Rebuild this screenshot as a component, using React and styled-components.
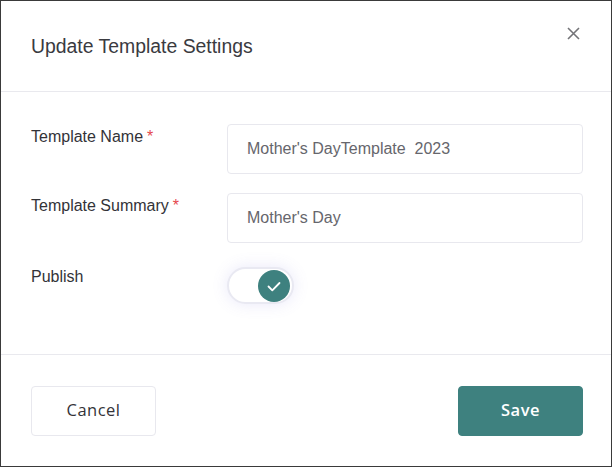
import React from 'react';
import styled, { createGlobalStyle } from 'styled-components';

const GlobalStyle = createGlobalStyle`
  html, body {
    margin: 0;
    padding: 0;
    background: #ffffff;
  }
  * {
    box-sizing: border-box;
  }
`;

const Modal = styled.div`
  width: 612px;
  height: 467px;
  border: 1px solid #3a3a3a;
  background: #ffffff;
  display: flex;
  flex-direction: column;
  font-family: 'Liberation Sans', Arial, sans-serif;
`;

const Header = styled.div`
  position: relative;
  height: 91px;
  flex: none;
  display: flex;
  align-items: center;
  padding: 0 30px 0;
  border-bottom: 1px solid #e9e9ee;
`;

const Title = styled.h2`
  margin: 0;
  font-size: 19.4px;
  font-weight: 400;
  color: #3a3a3f;
`;

const CloseButton = styled.button`
  position: absolute;
  top: 22px;
  right: 28px;
  width: 20px;
  height: 20px;
  padding: 0;
  border: none;
  background: transparent;
  display: flex;
  align-items: center;
  justify-content: center;
  cursor: pointer;
`;

const Body = styled.div`
  flex: 1;
  padding: 32px 28px 0 30px;
  display: flex;
  flex-direction: column;
  gap: 19px;
`;

const Row = styled.div`
  display: grid;
  grid-template-columns: 196px 1fr;
  align-items: start;
`;

const Label = styled.label`
  font-size: 16px;
  line-height: 24px;
  color: #333338;
  padding-top: ${(p) => p.$offset || 1}px;
`;

const Required = styled.span`
  color: #e5484d;
  margin-left: 4px;
`;

const TextInput = styled.input`
  width: 356px;
  height: 50px;
  border: 1px solid #e8e8ee;
  border-radius: 4px;
  padding: 0 19px;
  font-family: 'Liberation Sans', Arial, sans-serif;
  font-size: 16px;
  color: #66666c;
  background: #ffffff;
  outline: none;
`;

const Toggle = styled.div`
  margin-top: 5px;
  width: 67px;
  height: 37px;
  border-radius: 19px;
  border: 2px solid #e9e9f2;
  background: #ffffff;
  box-shadow: 0 0 16px rgba(120, 110, 220, 0.16);
  display: flex;
  align-items: center;
  justify-content: ${(p) => (p.$on ? 'flex-end' : 'flex-start')};
  padding: 0 2px;
`;

const Knob = styled.div`
  width: 32px;
  height: 32px;
  margin-top: 1px;
  border-radius: 50%;
  background: #3e817f;
  display: flex;
  align-items: center;
  justify-content: center;
`;

const Footer = styled.div`
  flex: none;
  height: 112px;
  border-top: 1px solid #e9e9ee;
  padding: 31px 28px 0 30px;
  display: flex;
  justify-content: space-between;
  align-items: flex-start;
`;

const Button = styled.button`
  width: 125px;
  height: 50px;
  padding: 0 0 3px;
  border-radius: 4px;
  font-family: 'Open Sans', 'Inter', sans-serif;
  font-size: 16.5px;
  letter-spacing: 0.5px;
  cursor: pointer;
  border: 1px solid ${(p) => (p.$primary ? '#3e817f' : '#e8e8ee')};
  background: ${(p) => (p.$primary ? '#3e817f' : '#ffffff')};
  color: ${(p) => (p.$primary ? '#ffffff' : '#333338')};
  font-weight: ${(p) => (p.$primary ? 600 : 400)};
`;

export default function App() {
  return (
    <>
      <GlobalStyle />
      <Modal>
        <Header>
          <Title>Update Template Settings</Title>
          <CloseButton aria-label="Close">
            <svg width="13" height="13" viewBox="0 0 13 13" fill="none">
              <path d="M1 1l11 11M12 1L1 12" stroke="#747478" strokeWidth="1.6" />
            </svg>
          </CloseButton>
        </Header>
        <Body>
          <Row>
            <Label>
              Template Name<Required>*</Required>
            </Label>
            <TextInput readOnly value="Mother's DayTemplate  2023" />
          </Row>
          <Row>
            <Label>
              Template Summary<Required>*</Required>
            </Label>
            <TextInput readOnly value="Mother's Day" />
          </Row>
          <Row>
            <Label $offset={3}>Publish</Label>
            <Toggle $on>
              <Knob>
                <svg width="14" height="11" viewBox="0 0 14 11" fill="none">
                  <path d="M1.5 5.5l3.8 3.8L12.5 2" stroke="#ffffff" strokeWidth="1.8" strokeLinecap="round" strokeLinejoin="round" />
                </svg>
              </Knob>
            </Toggle>
          </Row>
        </Body>
        <Footer>
          <Button>Cancel</Button>
          <Button $primary>Save</Button>
        </Footer>
      </Modal>
    </>
  );
}
